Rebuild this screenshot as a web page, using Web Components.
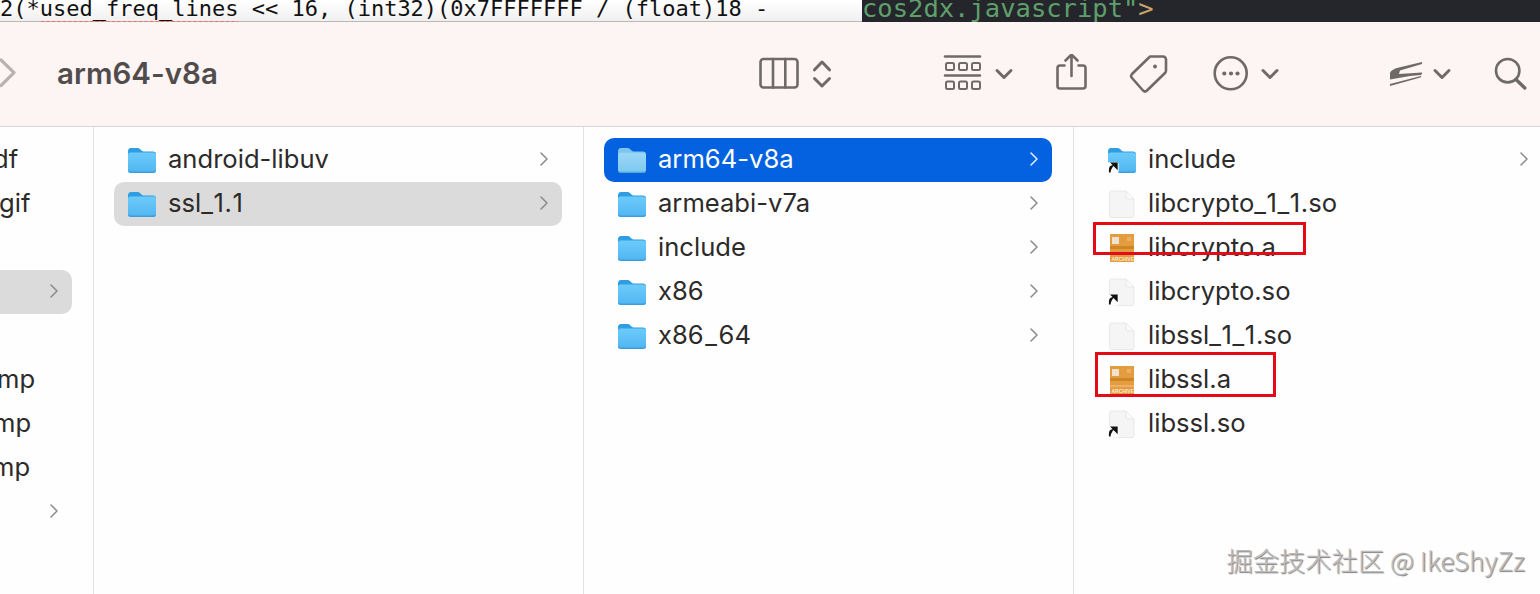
<!DOCTYPE html>
<html>
<head>
<meta charset="utf-8">
<style>
  html, body { margin: 0; height: 594px; overflow: hidden; background: #fefefe; }
  body { font-family: Inter, "Noto Sans CJK SC", sans-serif; position: relative; }
</style>
</head>
<body>
<code-strip></code-strip>
<finder-toolbar>
  <finder-glyph name="back"></finder-glyph>
  <span slot="title">arm64-v8a</span>
  <finder-glyph name="columns"></finder-glyph>
  <finder-glyph name="updown" style="margin-left:12px"></finder-glyph>
  <finder-glyph name="group" style="margin-left:111px"></finder-glyph>
  <finder-glyph name="chev" style="margin-left:11px"></finder-glyph>
  <finder-glyph name="share" style="margin-left:41px"></finder-glyph>
  <finder-glyph name="tag" style="margin-left:40px"></finder-glyph>
  <finder-glyph name="more" style="margin-left:43px"></finder-glyph>
  <finder-glyph name="chev" style="margin-left:10px"></finder-glyph>
  <finder-glyph name="squiggle" style="margin-left:108px"></finder-glyph>
  <finder-glyph name="chev" style="margin-left:8px"></finder-glyph>
  <finder-glyph name="search" style="margin-left:41px"></finder-glyph>
</finder-toolbar>
<finder-browser>
  <finder-column first>
    <finder-row clip="-7">df</finder-row>
    <finder-row clip="-1">gif</finder-row>
    <finder-row></finder-row>
    <finder-row active chevron></finder-row>
    <finder-row></finder-row>
    <finder-row clip="-3">mp</finder-row>
    <finder-row clip="-7">mp</finder-row>
    <finder-row clip="-8">mp</finder-row>
    <finder-row chevron></finder-row>
  </finder-column>
  <finder-column>
    <finder-row icon="folder" chevron>android-libuv</finder-row>
    <finder-row icon="folder" chevron active>ssl_<i>1</i>.<i>1</i></finder-row>
  </finder-column>
  <finder-column>
    <finder-row icon="folder" chevron selected>arm64-v8a</finder-row>
    <finder-row icon="folder" chevron>armeabi-v7a</finder-row>
    <finder-row icon="folder" chevron>include</finder-row>
    <finder-row icon="folder" chevron>x86</finder-row>
    <finder-row icon="folder" chevron>x86<b>_</b>64</finder-row>
  </finder-column>
  <finder-column last>
    <finder-row icon="folder" alias chevron>include</finder-row>
    <finder-row icon="file">libcrypto_<i>1</i>_<i>1</i>.so</finder-row>
    <finder-row icon="archive">libcrypto.a</finder-row>
    <finder-row icon="file" alias>libcrypto.so</finder-row>
    <finder-row icon="file">libssl_<i>1</i>_<i>1</i>.so</finder-row>
    <finder-row icon="archive">libssl.a</finder-row>
    <finder-row icon="file" alias>libssl.so</finder-row>
  </finder-column>
</finder-browser>
<red-mark style="left:1093px;top:222px;width:213px;height:33px"></red-mark>
<red-mark style="left:1095px;top:352px;width:181px;height:45px"></red-mark>
<water-mark>掘金技术社区 @ IkeShyZz</water-mark>

<script>
(function () {
  const INK = '#6f6a6a';

  // top strip: two editor windows peeking in above the finder window
  class CodeStrip extends HTMLElement {
    constructor() {
      super();
      this.attachShadow({ mode: 'open' }).innerHTML = `
      <style>
        :host {
          display: flex;
          height: 22px;
          overflow: hidden;
          font-family: "DejaVu Sans Mono", monospace;
        }
        .left {
          flex: 0 0 862px;
          box-sizing: border-box;
          height: 22px;
          font-size: 22px;
          line-height: 18px;
          white-space: pre;
          color: #111;
          background: linear-gradient(#ffffff, #f1f0f0);
          border-bottom: 1px solid #b9b7b7;
        }
        .right {
          flex: 1;
          font-size: 25.5px;
          line-height: 17px;
          white-space: pre;
          color: #5f9f6c;
          background: #24262b;
        }
        .err {
          background: radial-gradient(circle, #ef6a60 1.6px, transparent 2px) 0 100% / 5.45px 5px repeat-x;
          padding-bottom: 4px;
        }
        .tan { color: #c9a56b; }
      </style>
      <div class="left">2(*<span class="err">used_freq_lines</span> &lt;&lt; 16, (int32)(0x7FFFFFFF / (float)18 -</div>
      <div class="right">cos2dx.javascript"<span class="tan">&gt;</span></div>`;
    }
  }
  customElements.define('code-strip', CodeStrip);

  class FinderToolbar extends HTMLElement {
    constructor() {
      super();
      this.attachShadow({ mode: 'open' }).innerHTML = `
      <style>
        :host {
          display: flex;
          align-items: center;
          box-sizing: border-box;
          height: 105px;
          background: #fdf4f4;
          border-bottom: 1px solid #d8d5d5;
          overflow: hidden;
        }
        .title {
          flex: 0 0 742px;
          box-sizing: border-box;
          padding-left: 41px;
          color: #514c4c;
          font-size: 29.5px;
          font-weight: 600;
          margin-top: -3px;
        }
      </style>
      <slot name="back"></slot>
      <div class="title"><slot name="title"></slot></div>
      <slot></slot>`;
    }
    connectedCallback() {
      const first = this.querySelector('finder-glyph[name=back]');
      if (first) first.slot = 'back';
    }
  }
  customElements.define('finder-toolbar', FinderToolbar);

  // drawn in page coordinates, so each viewBox is just the slice of the toolbar it covers
  const GLYPHS = {
    back: { box: [0, 16], ink: '#b7b2b2', body: '<path d="M1 60l13 12.7L1 85.5" stroke-width="3.2"/>' },
    columns: { box: [758, 42], body: '<rect x="760.5" y="59" width="37" height="28.5" rx="3"/><path d="M773 59v28.5M785.3 59v28.5"/>' },
    updown: { box: [812, 20], body: '<path d="M2.5 15.8L10 8l7.500 7.800" transform="translate(812 54)" stroke-width="3"/><path d="M2.5 24.500L10 32l7.500-7.500" transform="translate(812 54)" stroke-width="3"/>' },
    group: { box: [943, 40], body: '<path d="M945 56.500h35M945 75.500h35"/><g stroke-width="2"><rect x="946" y="63" width="8" height="7" rx="1.500"/><rect x="959" y="63" width="8" height="7" rx="1.500"/><rect x="972" y="63" width="8" height="7" rx="1.500"/><rect x="946" y="81.500" width="8" height="7.500" rx="1.500"/><rect x="959" y="81.500" width="8" height="7.500" rx="1.500"/><rect x="972" y="81.500" width="8" height="7.500" rx="1.500"/></g>' },
    chev: { box: [0, 20], body: '<path d="M3 16.500l7 7 7-7" transform="translate(0 54)" stroke-width="3"/>' },
    share: { box: [1055, 33], body: '<path d="M1064.500 65.500h-4.500a2.500 2.500 0 0 0-2.500 2.500v18a2.500 2.500 0 0 0 2.500 2.500h23a2.500 2.500 0 0 0 2.500-2.500V68a2.500 2.500 0 0 0-2.500-2.500h-4.500"/><path d="M1071.500 76V54.500M1065.500 60.500l6-6 6 6"/>' },
    tag: { box: [1128, 41], body: '<path d="M1150.500 56.500h12.500a3 3 0 0 1 3 3v11q0 1.500-1 2.500L1147 90.500q-2 2-4 0l-11-12.500q-1.800-2 0-4l17-16.500q.8-1 1.500-1z"/><circle cx="1155" cy="66.500" r="2" fill="#6f6a6a" stroke="none"/>' },
    more: { box: [1212, 38], body: '<circle cx="1230.700" cy="73.300" r="16"/><g fill="#6f6a6a" stroke="none"><circle cx="1224.300" cy="73.500" r="2.100"/><circle cx="1231" cy="73.500" r="2.100"/><circle cx="1237.500" cy="73.500" r="2.100"/></g>' },
    squiggle: { box: [1388, 36], body: '<path fill="#6f6a6a" stroke="none" d="M1422 62l-22 5.200q-9 2-10 5.800v6.500l20-3.400 11-1.100q1.500-1.200 1-2.500l-23 1.500 1-3.500 22-6.500zM1390 84l29-7.500 2.500-.8-1 1.800-30.500 8.500z"/>' },
    search: { box: [1493, 34], body: '<circle cx="1507.700" cy="70.700" r="11.700"/><path d="M1516 79.500l8.800 8.500" stroke-width="3.400"/>' }
  };

  class FinderGlyph extends HTMLElement {
    constructor() {
      super();
      this.attachShadow({ mode: 'open' });
    }
    connectedCallback() {
      const g = GLYPHS[this.getAttribute('name')];
      this.shadowRoot.innerHTML = `
      <style>
        :host { display: block; flex: none; height: 40px; }
        svg { display: block; }
      </style>
      <svg width="${g.box[1]}" height="40" viewBox="${g.box[0]} 54 ${g.box[1]} 40" fill="none"
           stroke="${g.ink || INK}" stroke-width="2.6" stroke-linecap="round" stroke-linejoin="round">${g.body}</svg>`;
    }
  }
  customElements.define('finder-glyph', FinderGlyph);

  class FinderBrowser extends HTMLElement {
    constructor() {
      super();
      this.attachShadow({ mode: 'open' }).innerHTML = `
      <style>
        :host { display: flex; height: 467px; overflow: hidden; background: #fefefe; }
      </style>
      <slot></slot>`;
    }
  }
  customElements.define('finder-browser', FinderBrowser);

  class FinderColumn extends HTMLElement {
    constructor() {
      super();
      this.attachShadow({ mode: 'open' }).innerHTML = `
      <style>
        :host {
          display: flex;
          flex-direction: column;
          flex: 0 0 490px;
          box-sizing: border-box;
          padding: 11px 0 0 20px;
          border-right: 1px solid #e3e2e2;
          overflow: hidden;
        }
        :host([first]) { flex-basis: 94px; padding-left: 0; --row-width: 72px; }
        :host([last]) { flex: 1; border-right: 0; }
      </style>
      <slot></slot>`;
    }
  }
  customElements.define('finder-column', FinderColumn);

  const FOLDER = (selected) => {
    const back = selected ? '#7cc6ee' : '#2f9de2';
    const top = selected ? '#9ad8f7' : '#6ccbfa';
    const bottom = selected ? '#7fc9f0' : '#52b7f2';
    const edge = selected ? '#5aaad8' : '#3a9edd';
    const id = selected ? 'fs' : 'fn';
    return `<svg width="30" height="28" viewBox="1 0 30 28">
      <defs><linearGradient id="${id}" x1="0" y1="0" x2="0" y2="1"><stop offset="0" stop-color="${top}"/><stop offset="1" stop-color="${bottom}"/></linearGradient></defs>
      <path d="M1 5.500Q1 2 4 2h6.500q1.500 0 2.500 1l1.500 1.500q1 1 2.500 1H26q3 0 3 3V12H1z" fill="${back}"/>
      <rect x="1" y="6.500" width="28" height="20.500" rx="2.500" fill="${edge}"/>
      <rect x="1" y="6.500" width="28" height="19" rx="2.500" fill="url(#${id})"/>
    </svg>`;
  };
  const FILE = `<svg width="30" height="28" viewBox="0 0 30 28">
      <path d="M1.500 3Q1.500 1 3.500 1H18l8 8V25.500q0 2-2 2H3.500q-2 0-2-2z" fill="#f6f5f5" stroke="#e9e8e8"/>
      <path d="M18 1v6q0 2 2 2h6z" fill="#fbfbfb" stroke="#e4e3e3" stroke-width=".8"/>
    </svg>`;
  const ARCHIVE = `<svg width="30" height="30" viewBox="1 0 30 30">
      <rect x="3" y="1" width="24" height="28" fill="#e39c40"/>
      <rect x="3" y="13" width="24" height="3" fill="#cf8426"/>
      <rect x="3" y="20" width="24" height="2" fill="#eeb066"/>
      <rect x="5" y="4" width="7" height="7" fill="#efe3cf"/>
      <rect x="20" y="4" width="4" height="4" fill="#eeb066"/>
      <text x="4.500" y="28" font-family="Liberation Sans, sans-serif" font-size="5" font-weight="700" fill="#fbe9d0">ARCHIVE</text>
    </svg>`;
  const ALIAS = `<svg class="alias" width="12" height="12" viewBox="0 0 10 10">
      <rect x=".3" y=".3" width="9.400" height="9.400" rx="1.500" fill="#fff"/>
      <path d="M2.300 8.700V6.200q0-2.800 2.900-3.100M4.200 1.200h4v4z" fill="#111" stroke="#111" stroke-width="1.400" />
    </svg>`;

  class FinderRow extends HTMLElement {
    constructor() {
      super();
      this.attachShadow({ mode: 'open' });
    }
    connectedCallback() {
      const kind = this.getAttribute('icon');
      const selected = this.hasAttribute('selected');
      let art = '';
      if (kind === 'folder') art = FOLDER(selected);
      if (kind === 'file') art = FILE;
      if (kind === 'archive') art = ARCHIVE;
      const clip = this.getAttribute('clip') || 0;
      this.shadowRoot.innerHTML = `
      <style>
        :host {
          display: flex;
          align-items: center;
          flex: none;
          box-sizing: border-box;
          width: var(--row-width, 448px);
          height: 44px;
          border-radius: 0 10px 10px 0;
          color: #2d2a2a;
          font-size: 25.6px;
          white-space: nowrap;
        }
        :host([icon]) { padding-left: 14px; border-radius: 10px; }
        :host([active]) { background: #dcdbdb; }
        :host([selected]) { background: #0461df; color: #fff; }
        .icon { position: relative; flex: 0 0 30px; height: 30px; display: flex; align-items: center; margin-right: 10px; }
        .alias { position: absolute; left: -1px; bottom: 1px; }
        .label { margin-top: -4px; margin-left: ${clip}px; }
        /* system font has a wider 1 and underscore than Inter */
        ::slotted(i) { font-style: normal; padding: 0 .6px; }
        ::slotted(b) { font-weight: 400; padding: 0 1.6px; }
        .chev { margin-left: auto; margin-right: 13px; margin-top: -2px; flex: none; }
      </style>
      ${kind ? `<div class="icon">${art}${this.hasAttribute('alias') ? ALIAS : ''}</div>` : ''}
      <span class="label"><slot></slot></span>
      ${this.hasAttribute('chevron') ? `<svg class="chev" width="10" height="16" viewBox="0 0 10 16" fill="none" stroke="${selected ? '#e6effc' : '#8b8989'}" stroke-width="1.500" stroke-linecap="round" stroke-linejoin="round"><path d="M2 2l6 6-6 6"/></svg>` : ''}`;
    }
  }
  customElements.define('finder-row', FinderRow);

  // red annotation boxes drawn over the screenshot
  class RedMark extends HTMLElement {
    constructor() {
      super();
      this.attachShadow({ mode: 'open' }).innerHTML = `
      <style>
        :host { position: absolute; display: block; box-sizing: border-box; border: 3px solid #e30b17; }
      </style>`;
    }
  }
  customElements.define('red-mark', RedMark);

  class WaterMark extends HTMLElement {
    constructor() {
      super();
      this.attachShadow({ mode: 'open' }).innerHTML = `
      <style>
        :host {
          position: absolute;
          right: 15px;
          top: 544px;
          display: block;
          color: #bcbcbc;
          font: 300 26.3px/32px "Noto Sans CJK SC", sans-serif;
          text-shadow: 1px 1px 1px #7a7a7a;
          white-space: nowrap;
        }
      </style>
      <slot></slot>`;
    }
  }
  customElements.define('water-mark', WaterMark);
})();
</script>
</body>
</html>
